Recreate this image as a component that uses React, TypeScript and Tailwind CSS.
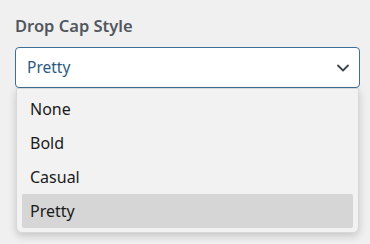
import React from 'react';

const options = ['None', 'Bold', 'Casual', 'Pretty'];

export default function App() {
  const selected = 'Pretty';

  return (
    <div
      className="w-[370px] h-[244px] bg-[#f0f0f0] px-[15px] pt-[14px] overflow-hidden"
      style={{ fontFamily: '"Noto Sans", "Open Sans", sans-serif' }}
    >
      <div className="text-[16.5px] leading-[24px] font-semibold text-[#50575e]">Drop Cap Style</div>

      <div className="relative mt-[9px] w-[345px]">
        {/* Select box */}
        <div className="h-[41px] flex items-center justify-between bg-white border border-[#3f6f95] rounded-[4px] pl-[11px] pr-[9px]">
          <span className="text-[15.5px] text-[#2c5a80]">{selected}</span>
          <svg width="14" height="14" viewBox="0 0 14 14" fill="none" className="text-[#3c434a]">
            <path d="M2 4.5 L7 9.5 L12 4.5" stroke="currentColor" strokeWidth="1.8" strokeLinecap="round" strokeLinejoin="round" />
          </svg>
        </div>

        {/* Open menu */}
        <div className="absolute left-[1px] right-[1px] top-[41px] bg-[#f2f2f2] rounded-b-[6px] border border-[#d8d8d8] shadow-[0_3px_8px_rgba(0,0,0,0.18)] px-[5px] pt-[3px] pb-[4px]">
          {options.map((o) => (
            <div
              key={o}
              className={
                'h-[34px] flex items-center pl-[8px] text-[16px] text-[#1a1a1a] rounded-[2px] ' +
                (o === selected ? 'bg-[#d6d6d6]' : '')
              }
            >
              {o}
            </div>
          ))}
        </div>
      </div>
    </div>
  );
}
